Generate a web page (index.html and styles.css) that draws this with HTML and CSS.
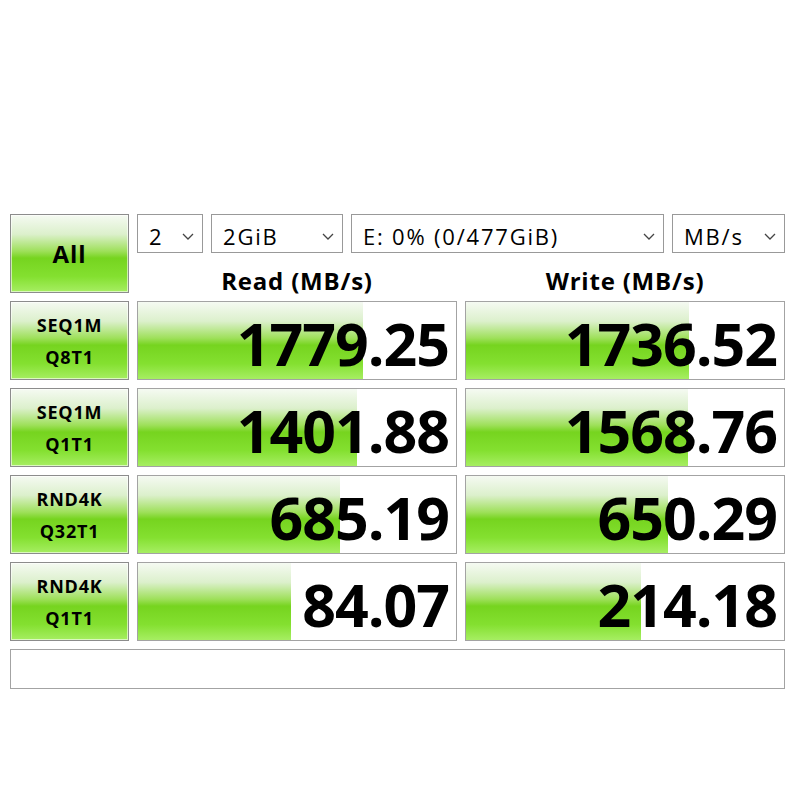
FILE: index.html
```html
<!DOCTYPE html>
<html lang="en">
<head>
    <meta charset="UTF-8">
    <meta name="viewport" content="width=device-width, initial-scale=1.0">
    <title>CrystalDiskMark</title>
    <link rel="stylesheet" href="styles.css">
</head>
<body>
    <div class="bench">
        <!-- Top row: All button, options and column titles -->
        <button class="btn btn-all">All</button>
        <div class="top-right">
            <div class="options">
                <div class="select sel-count"><span>2</span><svg class="chev" viewBox="0 0 12 7"><polyline points="1,1 6,6 11,1"/></svg></div>
                <div class="select sel-size"><span>2GiB</span><svg class="chev" viewBox="0 0 12 7"><polyline points="1,1 6,6 11,1"/></svg></div>
                <div class="select sel-drive"><span>E: 0% (0/477GiB)</span><svg class="chev" viewBox="0 0 12 7"><polyline points="1,1 6,6 11,1"/></svg></div>
                <div class="select sel-unit"><span>MB/s</span><svg class="chev" viewBox="0 0 12 7"><polyline points="1,1 6,6 11,1"/></svg></div>
            </div>
            <div class="titles">
                <div class="title">Read (MB/s)</div>
                <div class="title">Write (MB/s)</div>
            </div>
        </div>

        <!-- Results -->
        <button class="btn btn-test">SEQ1M<br>Q8T1</button>
        <div class="cell"><div class="bar" style="width: 225px"></div><span class="value">1779.25</span></div>
        <div class="cell"><div class="bar" style="width: 223px"></div><span class="value">1736.52</span></div>

        <button class="btn btn-test">SEQ1M<br>Q1T1</button>
        <div class="cell"><div class="bar" style="width: 219px"></div><span class="value">1401.88</span></div>
        <div class="cell"><div class="bar" style="width: 222px"></div><span class="value">1568.76</span></div>

        <button class="btn btn-test">RND4K<br>Q32T1</button>
        <div class="cell"><div class="bar" style="width: 202px"></div><span class="value">685.19</span></div>
        <div class="cell"><div class="bar" style="width: 202px"></div><span class="value">650.29</span></div>

        <button class="btn btn-test">RND4K<br>Q1T1</button>
        <div class="cell"><div class="bar" style="width: 153px"></div><span class="value">84.07</span></div>
        <div class="cell"><div class="bar" style="width: 175px"></div><span class="value">214.18</span></div>

        <div class="comment"></div>
    </div>
</body>
</html>
```

FILE: styles.css
```css
:root {
    --green: linear-gradient(to bottom,
        #f5faf2 0%,
        #dcf0cc 25%,
        #9ee05a 47%,
        #76d41f 56%,
        #84e030 80%,
        #a6ee62 100%);
    --cell-border: #a3a3a3;
    --btn-border: #8c8c8c;
}

* {
    margin: 0;
    padding: 0;
    box-sizing: border-box;
}

body {
    background: #fff;
    color: #000;
    font-family: 'Open Sans', 'Noto Sans', sans-serif;
}

.bench {
    display: grid;
    grid-template-columns: 119px 320px 320px;
    grid-auto-rows: 79px;
    gap: 8px;
    margin: 214px 0 0 10px;
    width: 775px;
}

/* Buttons */
.btn {
    border: 1px solid var(--btn-border);
    background: var(--green);
    font-family: 'Open Sans', sans-serif;
    font-weight: 700;
    color: #000;
    box-shadow: inset 0 0 0 1px rgba(255, 255, 255, 0.6);
}

.btn-all {
    font-size: 24px;
    letter-spacing: 1px;
}

.btn-test {
    font-size: 18px;
    line-height: 32px;
    letter-spacing: 0.8px;
}

/* Options and titles */
.top-right {
    grid-column: 2 / 4;
    display: flex;
    flex-direction: column;
}

.options {
    display: flex;
    gap: 8px;
    height: 39px;
}

.select {
    display: flex;
    align-items: center;
    justify-content: space-between;
    border: 1px solid #999;
    background: #fff;
    padding: 5px 8px 0 11px;
    font-size: 22px;
    letter-spacing: 1.8px;
    color: #000;
}

.chev {
    width: 12px;
    height: 7px;
    fill: none;
    stroke: #444;
    stroke-width: 1.3;
}

.sel-count { width: 66px; }
.sel-size { width: 132px; }
.sel-drive { width: 313px; }
.sel-unit { width: 113px; }

.titles {
    display: grid;
    grid-template-columns: 320px 320px;
    gap: 8px;
    flex: 1;
    padding-top: 16px;
}

.title {
    text-align: center;
    font-weight: 700;
    font-size: 24px;
    line-height: 24px;
    letter-spacing: 0.8px;
}

/* Result cells */
.cell {
    position: relative;
    border: 1px solid var(--cell-border);
    background: #fff;
    display: flex;
    align-items: center;
    justify-content: flex-end;
    padding-right: 7px;
}

.bar {
    position: absolute;
    left: 0;
    top: 0;
    bottom: 0;
    background: var(--green);
}

.value {
    position: relative;
    font-family: 'Open Sans', sans-serif;
    font-weight: 700;
    font-size: 59px;
    letter-spacing: -1px;
    margin-top: 4px;
}

.comment {
    grid-column: 1 / 4;
    height: 40px;
    border: 1px solid var(--cell-border);
    background: #fff;
}
```
